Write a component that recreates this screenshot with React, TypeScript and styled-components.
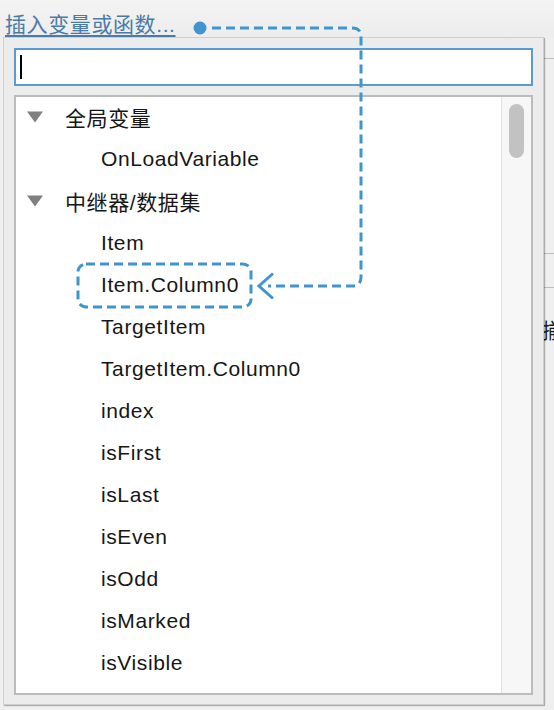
import React from "react";
import styled, { createGlobalStyle } from "styled-components";

const GlobalStyle = createGlobalStyle`
  html, body {
    margin: 0;
    padding: 0;
    background: #efefef;
  }
  body {
    font-family: "Liberation Sans", "Noto Sans CJK SC", sans-serif;
  }
`;

const FONT = `"Liberation Sans", "Noto Sans CJK SC", sans-serif`;

const Page = styled.div`
  position: relative;
  width: 554px;
  height: 710px;
  overflow: hidden;
  display: flex;
  background: linear-gradient(#f3f3f3, #ededed 36px, #efefef 38px);
`;

const Main = styled.div`
  flex: 1;
  padding: 12px 0 0 5px;
`;

const InsertLink = styled.a`
  font-family: ${FONT};
  font-size: 21px;
  line-height: 26px;
  letter-spacing: 0.6px;
  color: #4a7aa6;
  text-decoration: underline;
  text-underline-offset: 3px;
  cursor: pointer;
`;

const SideStrip = styled.div`
  width: 10px;
  display: flex;
  flex-direction: column;
  overflow: hidden;
`;

const StripRow = styled.div<{ $h: number }>`
  height: ${(p) => p.$h}px;
  flex: none;
  border-bottom: 1px solid #bdbdbd;
`;

const StripLabel = styled.div`
  margin-top: 30px;
  margin-left: -2px;
  font-family: ${FONT};
  font-size: 21px;
  line-height: 26px;
  color: #1a1a1a;
  white-space: nowrap;
`;

/* floating picker dropdown */
const Popup = styled.div`
  position: absolute;
  left: 3px;
  top: 37px;
  width: 541px;
  height: 668px;
  box-sizing: border-box;
  background: #ececec;
  border: 1px solid #cfcfcf;
  box-shadow: 1px 1px 1px rgba(0, 0, 0, 0.28);
  padding: 10px 10px 9px 10px;
  display: flex;
  flex-direction: column;
  gap: 9px;
`;

const SearchBox = styled.div`
  height: 38px;
  flex: none;
  box-sizing: border-box;
  background: #fff;
  border: 2px solid #5b9bd2;
  display: flex;
  align-items: center;
  padding-left: 4px;
`;

const Caret = styled.span`
  width: 2px;
  height: 24px;
  background: #000;
`;

const ListBox = styled.div`
  flex: 1;
  box-sizing: border-box;
  background: #fff;
  border: 2px solid #bcbcbc;
  display: flex;
  min-height: 0;
`;

const Rows = styled.div`
  flex: 1;
  display: flex;
  flex-direction: column;
`;

const Row = styled.div<{ $child?: boolean }>`
  height: 42px;
  flex: none;
  box-sizing: border-box;
  padding-bottom: 2px;
  display: flex;
  align-items: center;
  padding-left: ${(p) => (p.$child ? 85 : 11)}px;
  font-family: ${FONT};
  font-size: 21px;
  letter-spacing: 0.6px;
  color: #161616;
  white-space: nowrap;
`;

const Disclosure = styled.svg`
  width: 16px;
  height: 12px;
  margin-right: 22px;
  flex: none;
`;

const ScrollTrack = styled.div`
  width: 29px;
  flex: none;
  background: #f7f7f7;
  border-left: 1px solid #e2e2e2;
  display: flex;
  justify-content: center;
  padding-top: 7px;
`;

const ScrollThumb = styled.div`
  width: 15px;
  height: 54px;
  border-radius: 8px;
  background: #c2c2c2;
`;

const Callout = styled.svg`
  position: absolute;
  left: 0;
  top: 0;
  width: 554px;
  height: 710px;
  pointer-events: none;
`;

type Node = { label: string; group?: boolean };

const nodes: Node[] = [
  { label: "全局变量", group: true },
  { label: "OnLoadVariable" },
  { label: "中继器/数据集", group: true },
  { label: "Item" },
  { label: "Item.Column0" },
  { label: "TargetItem" },
  { label: "TargetItem.Column0" },
  { label: "index" },
  { label: "isFirst" },
  { label: "isLast" },
  { label: "isEven" },
  { label: "isOdd" },
  { label: "isMarked" },
  { label: "isVisible" },
];

const BLUE = "#4096cc";

export default function App() {
  return (
    <>
      <GlobalStyle />
      <Page>
        <Main>
          <InsertLink>插入变量或函数...</InsertLink>
        </Main>
        <SideStrip>
          <StripRow $h={58} />
          <StripRow $h={194} />
          <StripRow $h={33} />
          <StripLabel>揃</StripLabel>
        </SideStrip>

        <Popup>
          <SearchBox>
            <Caret />
          </SearchBox>
          <ListBox>
            <Rows>
              {nodes.map((n) => (
                <Row key={n.label} $child={!n.group}>
                  {n.group && (
                    <Disclosure viewBox="0 0 16 12">
                      <path d="M0 0.5 H16 L8 11.5 Z" fill="#808080" />
                    </Disclosure>
                  )}
                  {n.label}
                </Row>
              ))}
            </Rows>
            <ScrollTrack>
              <ScrollThumb />
            </ScrollTrack>
          </ListBox>
        </Popup>

        <Callout viewBox="0 0 554 710">
          <circle cx="200" cy="28" r="6.5" fill={BLUE} />
          <path
            d="M212 28 H352 Q361 28 361 37 V277 Q361 286 352 286 H268"
            fill="none"
            stroke={BLUE}
            strokeWidth="3"
            strokeDasharray="9 5"
          />
          <path
            d="M273 273.5 L259 286 L273 298.5"
            fill="none"
            stroke={BLUE}
            strokeWidth="3"
            strokeLinejoin="miter"
          />
          <rect
            x="78"
            y="264"
            width="173"
            height="43"
            rx="8"
            fill="none"
            stroke={BLUE}
            strokeWidth="3"
            strokeDasharray="9 5"
          />
        </Callout>
      </Page>
    </>
  );
}
